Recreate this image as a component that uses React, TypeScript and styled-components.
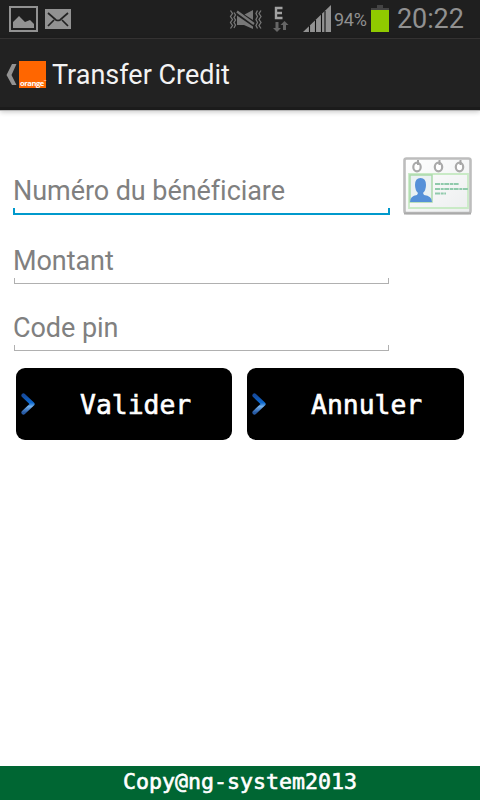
import React from "react";
import styled, { createGlobalStyle } from "styled-components";

const GlobalStyle = createGlobalStyle`
  * { box-sizing: border-box; }
  body { margin: 0; background: #fff; }
`;

const Screen = styled.div`
  width: 480px;
  height: 800px;
  display: flex;
  flex-direction: column;
  overflow: hidden;
  background: #fff;
  font-family: Roboto, sans-serif;
`;

const StatusBar = styled.header`
  height: 38px;
  flex: none;
  display: flex;
  background: #1f1f1f;
  color: #919191;
  svg { display: block; flex: none; }
`;

const Spacer = styled.div`
  flex: 1;
`;

const Battery = styled.span`
  width: 40px;
  padding: 8px 0 0 3px;
  font-size: 18px;
  line-height: 24px;
  letter-spacing: -0.3px;
  white-space: nowrap;
`;

const Clock = styled.span`
  width: 91px;
  padding: 2px 0 0 8px;
  font-size: 27px;
  line-height: 34px;
  letter-spacing: -0.1px;
  white-space: nowrap;
`;

const AppBar = styled.div`
  height: 72px;
  flex: none;
  display: flex;
  align-items: center;
  padding: 4px 0 0 6px;
  background: #222;
  border-top: 1px solid #343232;
  border-bottom: 3px solid #1b1b1b;
  box-shadow: 0 1px 0 #b8b8b8, 0 2px 5px rgba(0, 0, 0, 0.22);
`;

const Logo = styled.div`
  width: 27px;
  height: 27px;
  margin: -1px 0 0 1px;
  padding: 18px 0 0 1px;
  display: flex;
  background: #ff6600;
  color: #fff;
  font: 700 7.6px/9px "Open Sans", sans-serif;
  letter-spacing: -0.45px;
  white-space: nowrap;
`;

const Trademark = styled.span`
  font-size: 3px;
  line-height: 5px;
  letter-spacing: 0;
`;

const Title = styled.h1`
  margin: 0 0 0 6px;
  font-size: 27px;
  line-height: 32px;
  font-weight: 400;
  letter-spacing: 0;
  color: #f3f3f3;
  white-space: nowrap;
`;

const Form = styled.main`
  flex: 1;
  display: flex;
  flex-direction: column;
  padding-top: 44px;
`;

const FieldRow = styled.div`
  display: flex;
  height: 61px;
  gap: 11px;
`;

const Field = styled.div<{ $active?: boolean; $height: number }>`
  width: ${(p) => (p.$active ? 377 : 375)}px;
  height: ${(p) => p.$height}px;
  margin-left: ${(p) => (p.$active ? 13 : 14)}px;
  display: flex;
  flex-direction: column;
  justify-content: flex-end;
`;

const Hint = styled.span<{ $inset: number }>`
  height: 32px;
  margin-left: ${(p) => p.$inset}px;
  margin-bottom: -4px;
  font-size: 27px;
  line-height: 32px;
  letter-spacing: -0.06px;
  color: #808080;
  white-space: nowrap;
`;

const Underline = styled.span<{ $active?: boolean }>`
  height: ${(p) => (p.$active ? 7 : 6)}px;
  margin-top: 5px;
  border: ${(p) => (p.$active ? "2px solid #0099cc" : "1px solid #b0b0b0")};
  border-top: 0;
`;

const Buttons = styled.div`
  display: flex;
  gap: 15px;
  padding: 17px 16px 0;
`;

const Button = styled.button<{ $width: number }>`
  width: ${(p) => p.$width}px;
  height: 72px;
  border: 0;
  border-radius: 9px;
  padding: 0 0 0 5px;
  display: flex;
  align-items: center;
  background: #000;
  color: #fff;
`;

const Mono = styled.span<{ $size: number }>`
  font-family: "DejaVu Sans Mono", monospace;
  font-size: ${(p) => p.$size}px;
  line-height: 1.15;
  -webkit-text-stroke: 0.6px #fff;
  white-space: nowrap;
`;

const Label = styled(Mono)`
  margin: 2px 0 0 43px;
`;

const Footer = styled.footer`
  height: 34px;
  flex: none;
  display: flex;
  justify-content: center;
  align-items: center;
  padding-bottom: 2px;
  background: #006633;
  color: #fff;
`;

const StatusLeft = () => (
  <svg width="80" height="38" viewBox="0 0 80 38">
    <rect x="10" y="7" width="27" height="24" fill="none" stroke="#929292" strokeWidth="2" />
    <path d="M13 28v-6l6-6 6 6 5-2 4 4v4z" fill="#929292" />
    <rect x="45" y="9" width="26" height="20" fill="#929292" />
    <path d="m48 13 8 7q2 1 4 0l8-7M48 26l6-6m14 6-6-6" fill="none" stroke="#222" strokeWidth="1.7" />
  </svg>
);

const StatusIcons = () => (
  <svg width="106" height="38" viewBox="225 0 106 38">
    <g fill="none" stroke="#777" strokeWidth="1.3">
      <path d="m230.500 10.500 2 3-2 3 2 3-2 3 2 3-2 3" />
      <path d="m234 12.500 1.500 2.500-1.500 2.500 1.500 2.500-1.500 2.500 1.500 2.500-1.500 3" />
      <path d="m257.500 10.500-1.500 3 1.500 3-1.500 3 1.500 3-1.500 3 1.500 3" />
      <path d="m261 10.500-2 3 2 3-2 3 2 3-2 3 2 3" />
    </g>
    <path d="M244.500 14.500 253 10v10zM237 15.500l16 11V29l-9-4h-7z" fill="#777" />
    <path d="m237 11.500 17 12.500" stroke="#777" strokeWidth="2.200" />
    <path d="M282.500 8H276v10h6.500M276 13h6" fill="none" stroke="#a2a2a2" strokeWidth="2.400" />
    <path d="M275.500 22h3v6h2.500l-4 4-4-4h2.500zM283 30h3v-5h2.500l-4-4-4 4h2.500z" fill="#666" />
    <path d="M303 32 331 5v27z" fill="#929292" />
    <path d="M309.500 25.500v6.500M315.500 20v12M321.500 14v18M325 11v21" stroke="#111" strokeWidth="1.100" />
  </svg>
);

const BatteryIcon = () => (
  <svg width="18" height="38" viewBox="0 0 18 38">
    <path d="M6 5h6v3h6v2H0V8h6z" fill="#444" />
    <path d="M0 10h18v22H0z" fill="#90ca00" />
  </svg>
);

const BackIcon = () => (
  <svg width="12" height="24" viewBox="0 0 12 24">
    <path d="M6 1h4.500L5.500 12l5 10H6L.5 12z" fill="#929292" />
  </svg>
);

const Chevron = () => (
  <svg width="16" height="24" viewBox="0 0 16 24">
    <defs>
      <linearGradient id="edge" x2="0" y2="1">
        <stop offset="0" stopColor="#164b9d" />
        <stop offset=".42" stopColor="#0b68cf" />
        <stop offset=".65" stopColor="#72aeea" />
        <stop offset="1" stopColor="#285ba5" />
      </linearGradient>
    </defs>
    <path d="m2.500 3.500 9 8.500-9 8.500" fill="none" stroke="url(#edge)" strokeWidth="4.200" strokeLinecap="round" strokeLinejoin="round" />
  </svg>
);

const ContactCard = () => (
  <svg width="72" height="64" viewBox="402 154 72 64">
    <defs>
      <linearGradient id="paper" x2="1" y2="1">
        <stop stopColor="#fff" />
        <stop offset="1" stopColor="#eceeef" />
      </linearGradient>
      <filter id="soft"><feGaussianBlur stdDeviation=".75" /></filter>
    </defs>
    <g filter="url(#soft)">
      <rect x="405.500" y="158.500" width="66" height="54.500" rx="2" fill="url(#paper)" stroke="#bdbdbd" strokeWidth="2.600" />
      <path d="M405 213.500h67" stroke="#aaa" strokeWidth="2" />
      <path d="M410 174h59v34h-59z" fill="none" stroke="#c9eac6" strokeWidth="1.800" />
      <path d="M411 175h22v27h-22z" fill="#eaf1f3" stroke="#abd9aa" strokeWidth="1.500" />
      <path d="M411 202q0-6 7-7l1-2q-3-3-3-8 0-7 5.500-7t5.500 7q0 5-3 8l1 2q8 1 8 7z" fill="#5590d8" />
      <g fill="#fff" stroke="#aaa" strokeWidth="2.200">
        <ellipse cx="418" cy="167" rx="3.700" ry="4.300" />
        <ellipse cx="439.500" cy="167" rx="3.700" ry="4.300" />
        <ellipse cx="460.500" cy="167" rx="3.700" ry="4.300" />
      </g>
      <path d="M419 160v5m21.500-5v5m21-5v5" stroke="#a5a5a5" strokeWidth="2" />
      <path d="M436 184h24m-24 5h33m-33 4.500h11" stroke="#90caac" strokeWidth="1.800" strokeDasharray="5 .7 3 .6" />
    </g>
  </svg>
);

export default function App() {
  return (
    <Screen>
      <GlobalStyle />
      <StatusBar>
        <StatusLeft />
        <Spacer />
        <StatusIcons />
        <Battery>94%</Battery>
        <BatteryIcon />
        <Clock>20:22</Clock>
      </StatusBar>
      <AppBar>
        <BackIcon />
        <Logo>orange<Trademark>™</Trademark></Logo>
        <Title>Transfer Credit</Title>
      </AppBar>
      <Form>
        <FieldRow>
          <Field $active $height={61}>
            <Hint $inset={0}>Numéro du bénéficiare</Hint>
            <Underline $active />
          </Field>
          <ContactCard />
        </FieldRow>
        <Field $height={69}>
          <Hint $inset={-1}>Montant</Hint>
          <Underline />
        </Field>
        <Field $height={67}>
          <Hint $inset={-1}>Code pin</Hint>
          <Underline />
        </Field>
        <Buttons>
          <Button $width={216}><Chevron /><Label $size={26.4}>Valider</Label></Button>
          <Button $width={217}><Chevron /><Label $size={26.4}>Annuler</Label></Button>
        </Buttons>
      </Form>
      <Footer><Mono $size={21.6}>Copy@ng-system2013</Mono></Footer>
    </Screen>
  );
}
